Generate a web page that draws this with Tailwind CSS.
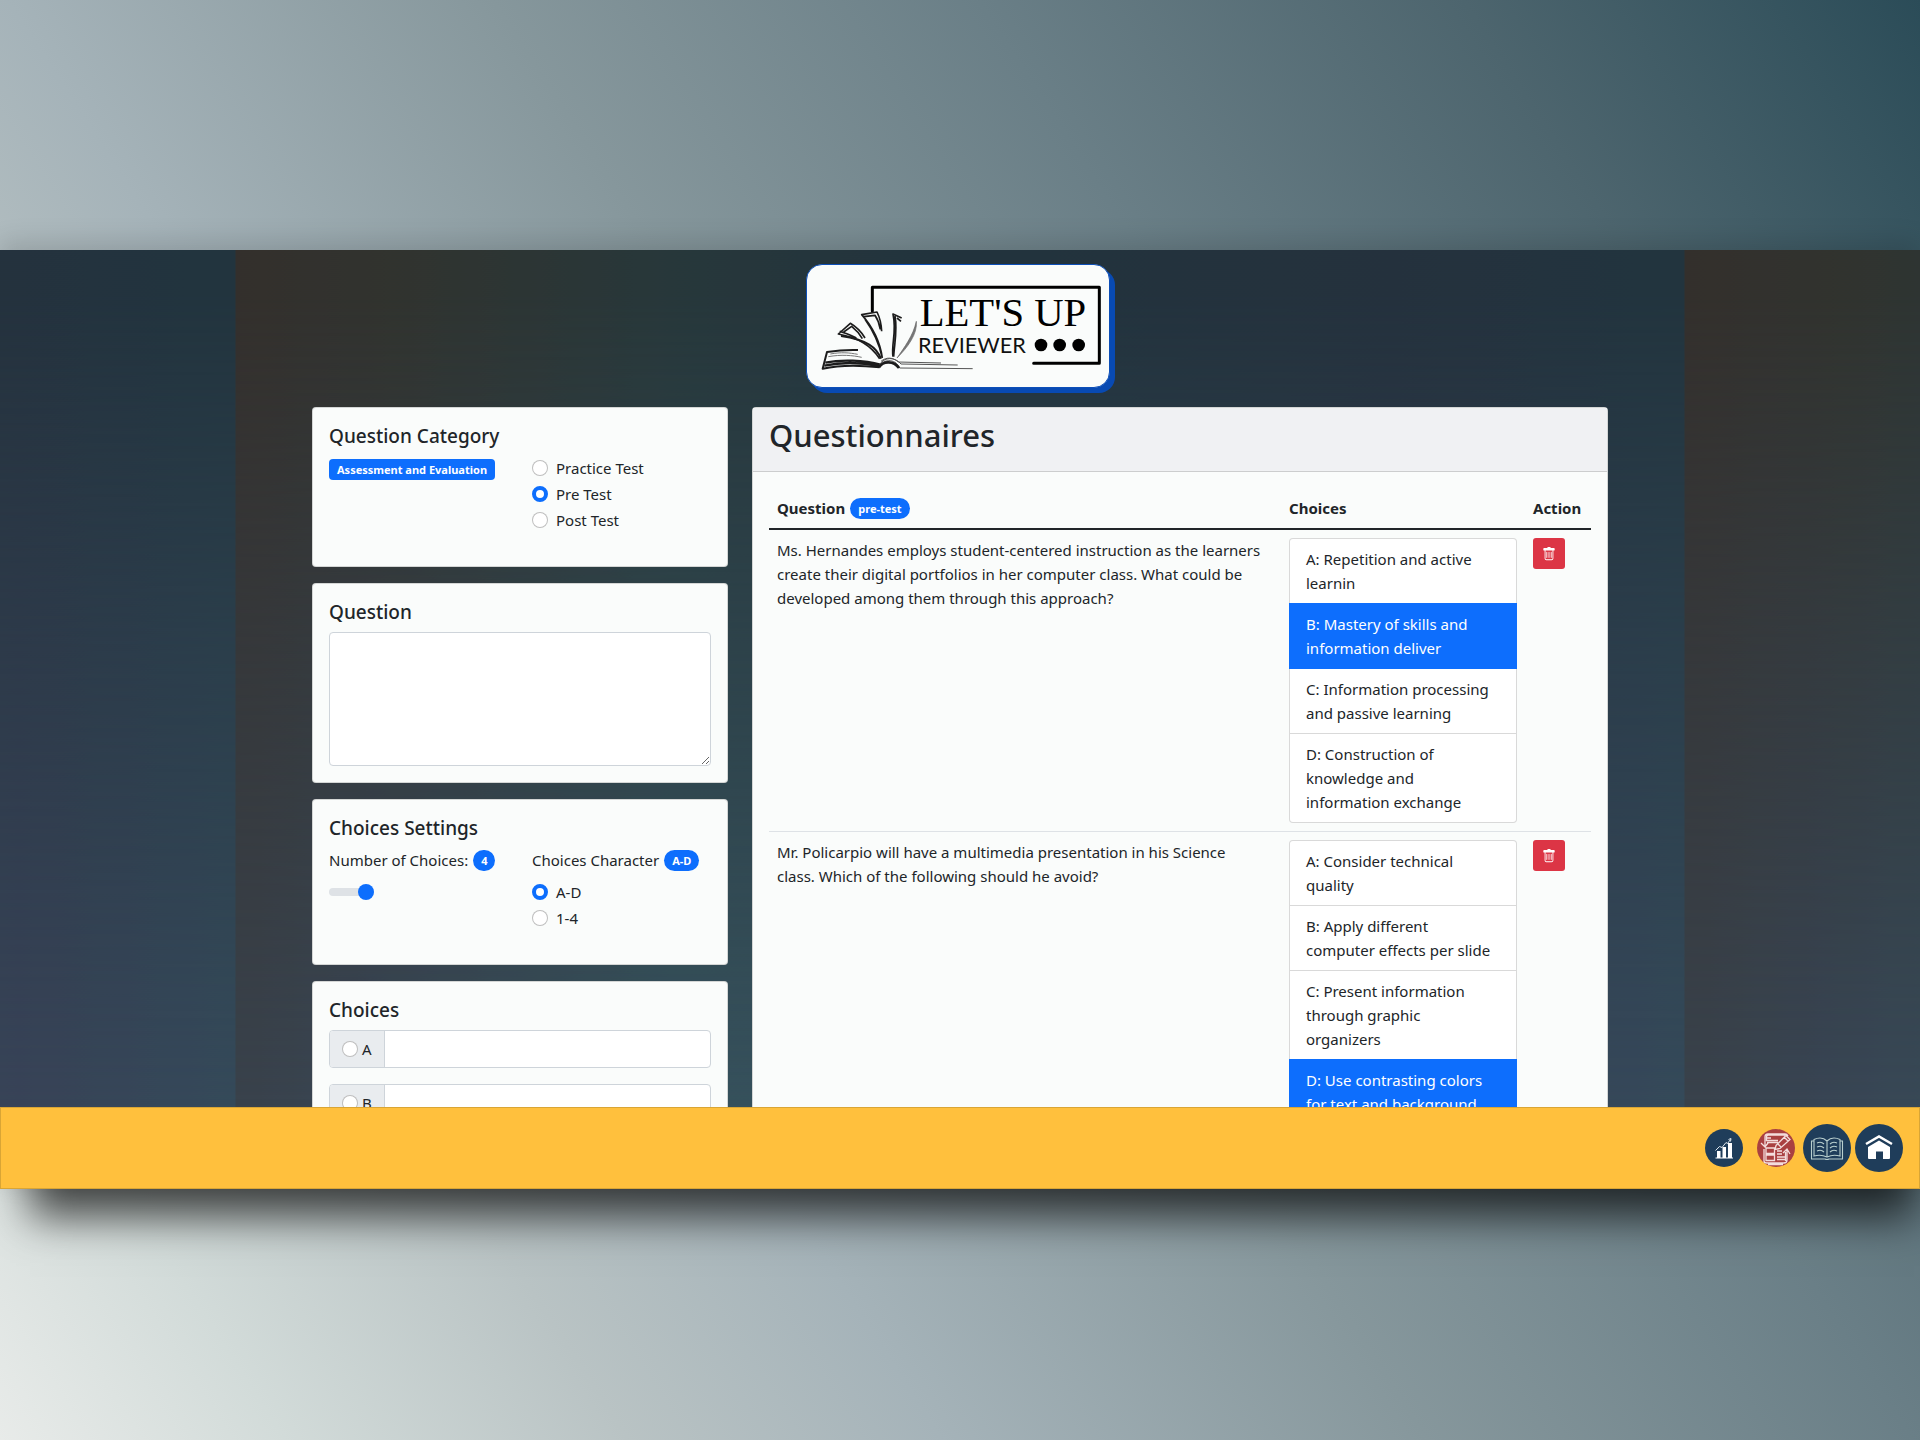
<!DOCTYPE html>
<html lang="en">
<head>
<meta charset="utf-8">
<meta name="viewport" content="width=device-width, initial-scale=1">
<title>Let's Up Reviewer - Questionnaires</title>
<script src="https://cdn.jsdelivr.net/npm/@tailwindcss/browser@4"></script>
</head>
<body class="flex h-screen flex-col overflow-hidden bg-[linear-gradient(57deg,#e8ebe9_0%,#d2dbd9_10%,#b9c3c4_22%,#a5b3b9_33%,#86979c_50%,#6a7f87_67%,#4d656e_84%,#2b4c58_100%)] pt-[250px] pb-[251px] font-['Noto_Sans',sans-serif] text-[15px] leading-6 text-[#212529]">
<div class="relative flex min-h-0 flex-1 flex-col shadow-[12px_46px_40px_-18px_rgba(0,0,0,0.68),0_-8px_24px_rgba(0,0,0,0.14)]">
  <main class="relative isolate min-h-0 flex-1 overflow-hidden">
    <!-- tiled backdrop: lower tones, then upper tones fading down over them -->
    <div class="absolute inset-0 -z-20 bg-[linear-gradient(90deg,#39424b_0%,#384554_10%,#36515c_30%,#35505c_60%,#384358_85%,#354a5a_100%)] bg-[length:1449px_100%] bg-center bg-repeat-x"></div>
    <div class="absolute inset-0 -z-10 bg-[linear-gradient(90deg,#332f2c_0%,#30332f_12%,#27373a_30%,#22333d_48%,#24313d_80%,#22343e_100%)] bg-[length:1449px_100%] bg-center bg-repeat-x [mask-image:linear-gradient(to_bottom,black_5%,rgba(0,0,0,0.55)_45%,transparent)]"></div>

    <header class="flex justify-center pt-[14px]">
      <a href="#" aria-label="Let's Up Reviewer" class="mr-1 block rounded-2xl border border-[#0d4fb8] bg-[#fafcfb] shadow-[5px_5px_0_#084ab3]">
        <svg class="block h-[122px] w-[302px]" viewBox="48 43 906 366" fill="none" stroke="#000">
          <path d="M244 182V110H925V338H728" stroke-width="9" stroke-linecap="round" stroke-linejoin="round"/>
          <g stroke="#1c1c1c" stroke-width="6" stroke-linejoin="round">
            <path d="M201 298C170 297 140 299 108 304L95 354C150 342 205 343 266 350" />
            <path d="M103 336C150 326 220 328 268 342M100 345C150 334 215 336 266 346" stroke-width="7"/>
            <path d="M118 310C150 304 175 306 200 311M112 318C150 311 185 314 212 320" stroke="#777" stroke-width="3"/>
            <path d="M266 324C240 285 205 262 142 250L178 218C195 228 210 242 222 262M146 242C170 250 186 255 196 262M158 244L182 227C196 238 206 250 214 264" stroke-width="5"/>
            <path d="M270 324C256 290 230 268 150 256" stroke-width="6"/>
            <path d="M274 322C268 280 250 235 212 192L258 184C266 200 271 220 272 242M218 198L252 194C260 206 265 220 268 236M222 206C250 245 266 285 274 322" stroke-width="5"/>
            <path d="M306 318C300 280 318 245 306 190L332 202M312 196C320 240 310 280 308 318M318 202L330 212" stroke-width="5"/>
            <path d="M376 212C380 250 350 290 318 322C340 290 366 256 376 212Z" fill="#777" stroke="#666" stroke-width="2"/>
            <path d="M266 350C272 326 312 320 326 352L545 354M266 342C280 318 312 318 330 340L500 343M270 332C286 318 306 320 322 334L450 337" stroke="#555" stroke-width="3"/>
            <path d="M264 350C276 330 308 330 324 352" stroke-width="8"/>
          </g>
          <g fill="#000" stroke="none">
            <circle cx="750" cy="283" r="19"/><circle cx="806" cy="283" r="19"/><circle cx="863" cy="283" r="19"/>
            <text x="386" y="226" font-family="Liberation Serif, serif" font-size="122">LET'S UP</text>
            <text x="381" y="307" font-family="Lato, sans-serif" font-size="65" fill="#111">REVIEWER</text>
          </g>
        </svg>
      </a>
    </header>

    <div class="mx-auto mt-[19px] grid max-w-[1320px] grid-cols-3 items-start gap-6 px-3">
      <form class="flex flex-col gap-4">
        <section class="rounded-sm border border-black/15 bg-[#fafcfb] p-4">
          <h5 class="mb-2 text-[19px] leading-6 font-medium">Question Category</h5>
          <div class="mb-4 grid grid-cols-2 gap-6">
            <div><span class="mt-[3px] inline-block rounded-sm bg-[#0d6efd] px-2 py-1 text-[11px] leading-[13px] font-bold whitespace-nowrap text-white">Assessment and Evaluation</span></div>
            <div class="space-y-[2px] pb-[2px]">
              <label class="flex items-center gap-2"><input type="radio" name="test" class="size-4 appearance-none rounded-full border border-black/25 bg-white checked:border-4 checked:border-[#0d6efd]">Practice Test</label>
              <label class="flex items-center gap-2"><input type="radio" name="test" checked class="size-4 appearance-none rounded-full border border-black/25 bg-white checked:border-4 checked:border-[#0d6efd]">Pre Test</label>
              <label class="flex items-center gap-2"><input type="radio" name="test" class="size-4 appearance-none rounded-full border border-black/25 bg-white checked:border-4 checked:border-[#0d6efd]">Post Test</label>
            </div>
          </div>
        </section>

        <section class="rounded-sm border border-black/15 bg-[#fafcfb] p-4">
          <h5 class="mb-2 text-[19px] leading-6 font-medium"><label for="question">Question</label></h5>
          <textarea id="question" rows="5" class="block h-[134px] w-full rounded border border-[#ced4da] bg-white px-3 py-1.5"></textarea>
        </section>

        <section class="rounded-sm border border-black/15 bg-[#fafcfb] p-4">
          <h5 class="mb-2 text-[19px] leading-6 font-medium">Choices Settings</h5>
          <div class="mb-4 grid grid-cols-2 gap-6">
            <div>
              <label for="count" class="mb-2 flex items-center gap-[5px] whitespace-nowrap">Number of Choices: <span class="rounded-full bg-[#0d6efd] px-2 py-1 text-[11px] leading-[13px] font-bold text-white">4</span></label>
              <div class="flex h-6 items-center">
                <input id="count" type="range" min="2" max="4" value="4" class="h-4 w-[45px] appearance-none bg-transparent [&::-webkit-slider-runnable-track]:h-2 [&::-webkit-slider-runnable-track]:rounded-full [&::-webkit-slider-runnable-track]:bg-[#dee2e6] [&::-webkit-slider-thumb]:-mt-1 [&::-webkit-slider-thumb]:size-4 [&::-webkit-slider-thumb]:appearance-none [&::-webkit-slider-thumb]:rounded-full [&::-webkit-slider-thumb]:bg-[#0d6efd]">
              </div>
            </div>
            <div class="pb-[2px]">
              <div class="mb-2 flex items-center gap-[5px] whitespace-nowrap">Choices Character <span class="rounded-full bg-[#0d6efd] px-2 py-1 text-[11px] leading-[13px] font-bold text-white">A-D</span></div>
              <div class="space-y-[2px]">
                <label class="flex items-center gap-2"><input type="radio" name="chars" checked class="size-4 appearance-none rounded-full border border-black/25 bg-white checked:border-4 checked:border-[#0d6efd]">A-D</label>
                <label class="flex items-center gap-2"><input type="radio" name="chars" class="size-4 appearance-none rounded-full border border-black/25 bg-white checked:border-4 checked:border-[#0d6efd]">1-4</label>
              </div>
            </div>
          </div>
        </section>

        <section class="rounded-sm border border-black/15 bg-[#fafcfb] p-4">
          <h5 class="mb-2 text-[19px] leading-6 font-medium">Choices</h5>
          <div class="mb-4 flex h-[38px] overflow-hidden rounded border border-[#ced4da] bg-white">
            <label class="flex items-center gap-1 border-r border-[#ced4da] bg-[#e9ecef] px-3"><input type="radio" name="answer" class="size-4 appearance-none rounded-full border border-black/25 bg-white checked:border-4 checked:border-[#0d6efd]">A</label>
            <input type="text" aria-label="Choice A" class="min-w-0 flex-1 px-3">
          </div>
          <div class="mb-4 flex h-[38px] overflow-hidden rounded border border-[#ced4da] bg-white">
            <label class="flex items-center gap-1 border-r border-[#ced4da] bg-[#e9ecef] px-3"><input type="radio" name="answer" class="size-4 appearance-none rounded-full border border-black/25 bg-white checked:border-4 checked:border-[#0d6efd]">B</label>
            <input type="text" aria-label="Choice B" class="min-w-0 flex-1 px-3">
          </div>
        </section>
      </form>

      <section class="col-span-2 rounded-sm border border-black/15 bg-[#fafcfb]">
        <div class="border-b border-black/15 bg-[#f0f1f3] px-4 pt-2 pb-4">
          <h2 class="text-[31px] leading-[39px] font-medium">Questionnaires</h2>
        </div>
        <div class="p-4">
          <table class="w-full table-fixed border-collapse text-left align-top">
            <colgroup><col><col class="w-[244px]"><col class="w-[66px]"></colgroup>
            <thead>
              <tr class="border-b-2 border-[#212529]">
                <th class="p-2 font-bold"><div class="flex items-center gap-[5px]">Question <span class="rounded-full bg-[#0d6efd] px-2 py-1 text-[11px] leading-[13px] font-bold text-white">pre-test</span></div></th>
                <th class="p-2 font-bold">Choices</th>
                <th class="p-2 font-bold">Action</th>
              </tr>
            </thead>
            <tbody class="align-top">
              <tr class="border-b border-[#dee2e6]">
                <td class="p-2">Ms. Hernandes employs student-centered instruction as the learners create their digital portfolios in her computer class. What could be developed among them through this approach?</td>
                <td class="p-2">
                  <ul class="rounded border border-black/15 bg-white">
                    <li class="px-4 py-2">A: Repetition and active learnin</li>
                    <li class="-mx-px bg-[#0d6efd] px-[17px] py-[9px] text-white">B: Mastery of skills and information deliver</li>
                    <li class="px-4 py-2">C: Information processing and passive learning</li>
                    <li class="border-t border-black/15 px-4 py-2">D: Construction of knowledge and information exchange</li>
                  </ul>
                </td>
                <td class="p-2">
                  <button type="button" aria-label="Delete question" class="flex h-[31px] w-8 items-center justify-center rounded-[3px] bg-[#dc3545] text-white">
                    <svg class="size-[14px]" viewBox="0 0 16 16" fill="currentColor"><path d="M5.5 5.5A.5.5 0 0 1 6 6v6a.5.5 0 0 1-1 0V6a.5.5 0 0 1 .5-.5zm2.5 0a.5.5 0 0 1 .5.5v6a.5.5 0 0 1-1 0V6a.5.5 0 0 1 .5-.5zm3 .5a.5.5 0 0 0-1 0v6a.5.5 0 0 0 1 0V6z"/><path fill-rule="evenodd" d="M14.5 3a1 1 0 0 1-1 1H13v9a2 2 0 0 1-2 2H5a2 2 0 0 1-2-2V4h-.5a1 1 0 0 1-1-1V2a1 1 0 0 1 1-1H6a1 1 0 0 1 1-1h2a1 1 0 0 1 1 1h3.500a1 1 0 0 1 1 1v1zM4.118 4 4 4.059V13a1 1 0 0 0 1 1h6a1 1 0 0 0 1-1V4.059L11.882 4H4.118z"/></svg>
                  </button>
                </td>
              </tr>
              <tr class="border-b border-[#dee2e6]">
                <td class="p-2">Mr. Policarpio will have a multimedia presentation in his Science<br>class. Which of the following should he avoid?</td>
                <td class="p-2">
                  <ul class="rounded border border-black/15 bg-white">
                    <li class="px-4 py-2">A: Consider technical quality</li>
                    <li class="border-t border-black/15 px-4 py-2">B: Apply different computer effects per slide</li>
                    <li class="border-t border-black/15 px-4 py-2">C: Present information through graphic<br>organizers</li>
                    <li class="-mx-px -mb-px rounded-b bg-[#0d6efd] px-[17px] py-[9px] text-white">D: Use contrasting colors for text and background</li>
                  </ul>
                </td>
                <td class="p-2">
                  <button type="button" aria-label="Delete question" class="flex h-[31px] w-8 items-center justify-center rounded-[3px] bg-[#dc3545] text-white">
                    <svg class="size-[14px]" viewBox="0 0 16 16" fill="currentColor"><path d="M5.5 5.5A.5.5 0 0 1 6 6v6a.5.5 0 0 1-1 0V6a.5.5 0 0 1 .5-.5zm2.5 0a.5.5 0 0 1 .5.5v6a.5.5 0 0 1-1 0V6a.5.5 0 0 1 .5-.5zm3 .5a.5.5 0 0 0-1 0v6a.5.5 0 0 0 1 0V6z"/><path fill-rule="evenodd" d="M14.5 3a1 1 0 0 1-1 1H13v9a2 2 0 0 1-2 2H5a2 2 0 0 1-2-2V4h-.5a1 1 0 0 1-1-1V2a1 1 0 0 1 1-1H6a1 1 0 0 1 1-1h2a1 1 0 0 1 1 1h3.500a1 1 0 0 1 1 1v1zM4.118 4 4 4.059V13a1 1 0 0 0 1 1h6a1 1 0 0 0 1-1V4.059L11.882 4H4.118z"/></svg>
                  </button>
                </td>
              </tr>
            </tbody>
          </table>
        </div>
      </section>
    </div>
  </main>

  <nav class="flex h-[82px] shrink-0 items-center justify-end border border-[#d9a535] bg-[#ffc03d] pr-4">
    <a href="#" aria-label="Statistics" class="mr-[14px]">
      <svg class="size-[38px]" viewBox="0 0 38 38"><circle cx="19" cy="19" r="19" fill="#1f3d5a"/><g fill="#fff"><path d="M12 22h3.500v7H12zM17.500 18H21v11h-3.500zM23 14h4v15h-4zM10.500 28.500h17.500v1H10.500z"/></g><path d="M10.500 21.500l4-4 2.500 1 4-5 1.500 1 3-4M23.500 10.500l2.500-1-.5 3" fill="none" stroke="#dfe8ee"/></svg>
    </a>
    <a href="#" aria-label="Tests" class="mr-2">
      <svg class="size-[38px]" viewBox="0 0 38 38" fill="none" stroke="#f3dddd" stroke-width="1.300"><circle cx="19" cy="19" r="19" fill="#a94041" stroke="none"/><path d="M8 17V8q0-3 3-3h17q2 0 3 2M9.500 12V8q0-2 2-2H28M4 14l4 4 3-4M9 9h5M9 11.500h12M10 13.500h11M19 16.500l10-10 4 4-10 9-5 1zM21 15l3 3M27 8l4 4M9 19h8.500v5.500H9zM9 26h8.500v5.500H9zM7 20v12q0 2 3 2h17q3 0 3-3V20M26 24l4-4 3 5M20 22h5M20 25h5M20 28h8M20 30.500h8M11 35.500h15M28.500 23v9"/></svg>
    </a>
    <a href="#" aria-label="Lessons" class="mr-1">
      <svg class="size-12" viewBox="0 0 48 48" fill="none" stroke="#b9cfce" stroke-width="1.100"><circle cx="24" cy="24" r="24" fill="#1f3d5a" stroke="none"/><path d="M24 17q-3-3-7-3-3 0-6 1.500v16.500q7-2 13 1 6-3 13-1V15.500Q34 14 31 14q-4 0-7 3zV33M11 17H8.500v18H22q2 1 4 0h13.500V17H37M14 19q4-2 7 1M14 23q4-2 7 1M14 27q4-2 7 1M27 20q3-3 7-1M27 24q3-3 7-1M27 28q3-3 7-1"/></svg>
    </a>
    <a href="#" aria-label="Home">
      <svg class="size-12" viewBox="0 0 48 48"><circle cx="24" cy="24" r="24" fill="#1f3d5a"/><path d="M11 20L24 12.500l13 7.500" fill="none" stroke="#fff" stroke-width="2.500"/><path d="M13 23l11-6.500L35 23V34q0 1-1 1h-6v-7.500h-7V35h-7q-1 0-1-1z" fill="#fff"/></svg>
    </a>
  </nav>
</div>
</body>
</html>
